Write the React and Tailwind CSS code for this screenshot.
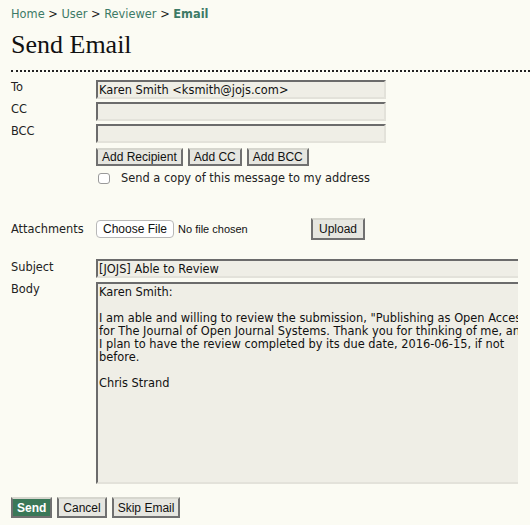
import React from 'react';

const sans = { fontFamily: '"DejaVu Sans", Verdana, sans-serif' };
const btnFont = { fontFamily: '"Liberation Sans", Arial, sans-serif' };

function Field({ value = '', wide = false }) {
  return (
    <input
      readOnly
      value={value}
      className={`h-[19px] border-2 border-t-[#6b6b6b] border-l-[#6b6b6b] border-b-[#e3e2da] border-r-[#e3e2da] bg-[#efeee6] px-[1px] text-[11.4px] text-[#111] outline-none ${wide ? 'w-[422px] border-r-0' : 'w-[290px]'}`}
      style={sans}
    />
  );
}

function Btn({ children, primary = false, className = 'h-[18px]' }) {
  return (
    <button
      className={`border-2 border-[#707070] border-t-[#d6d6ce] px-[4px] text-[12px] leading-none ${primary ? 'bg-[#3a7858] font-bold text-white' : 'bg-[#e6e6e0] text-[#111]'} ${className}`}
      style={btnFont}
    >
      {children}
    </button>
  );
}

const bodyText = `Karen Smith:

I am able and willing to review the submission, "Publishing as Open Access Policies,"
for The Journal of Open Journal Systems. Thank you for thinking of me, and
I plan to have the review completed by its due date, 2016-06-15, if not
before.

Chris Strand`;

export default function App() {
  return (
    <div className="min-h-[525px] w-[530px] overflow-hidden bg-[#fbfbf3] pl-[11px] text-[#222]" style={sans}>
      {/* breadcrumb */}
      <div className="pt-[7px] text-[11.4px] leading-[14px] text-[#222]">
        <span className="text-[#3d7a66]">Home</span> &gt; <span className="text-[#3d7a66]">User</span> &gt;{' '}
        <span className="text-[#3d7a66]">Reviewer</span> &gt; <span className="font-bold text-[#3d7a66]">Email</span>
      </div>

      <h1 className="mt-[9px] text-[26px] leading-[30px] text-[#111]" style={{ fontFamily: '"Liberation Serif", Georgia, serif' }}>
        Send Email
      </h1>

      <div className="mt-[10px] border-t-2 border-dotted border-[#222]" />

      {/* recipients */}
      <div className="mt-[8px] flex flex-col gap-[3px]">
        <div className="flex">
          <label className="w-[85px] text-[11.4px] leading-[14px]">To</label>
          <Field value="Karen Smith <ksmith@jojs.com>" />
        </div>
        <div className="flex">
          <label className="w-[85px] text-[11.4px] leading-[14px]">CC</label>
          <Field />
        </div>
        <div className="flex">
          <label className="w-[85px] text-[11.4px] leading-[14px]">BCC</label>
          <Field />
        </div>
      </div>

      <div className="ml-[85px] mt-[5px] flex gap-[5px]">
        <Btn>Add Recipient</Btn>
        <Btn>Add CC</Btn>
        <Btn>Add BCC</Btn>
      </div>

      <label className="ml-[87px] mt-[5px] flex items-center gap-[11px] text-[11.4px] leading-[14px]">
        <span className="block h-[11px] w-[12px] rounded-[3px] border border-[#9a9a9a] bg-white" />
        Send a copy of this message to my address
      </label>

      {/* attachments */}
      <div className="mt-[33px] flex h-[22px] items-center">
        <label className="w-[85px] text-[11.4px] leading-[14px]">Attachments</label>
        <div className="flex w-[215px] items-center">
          <button
            className="h-[18px] rounded-[4px] border border-[#b8b8b8] bg-white px-[6px] text-[12px] leading-none text-[#111]"
            style={btnFont}
          >
            Choose File
          </button>
          <span className="ml-[4px] text-[11px] text-[#111]" style={btnFont}>
            No file chosen
          </span>
        </div>
        <Btn className="h-[22px] px-[6px]">Upload</Btn>
      </div>

      {/* subject + body */}
      <div className="mt-[19px] flex">
        <label className="w-[85px] pt-[1px] text-[11.4px] leading-[14px]">Subject</label>
        <Field value="[JOJS] Able to Review" wide />
      </div>

      <div className="mt-[4px] flex">
        <label className="w-[85px] text-[11.4px] leading-[14px]">Body</label>
        <textarea
          readOnly
          wrap="off"
          value={bodyText}
          className="h-[202px] w-[422px] resize-none overflow-hidden border-2 border-r-0 border-t-[#6b6b6b] border-l-[#6b6b6b] border-b-[#e3e2da] bg-[#efeee6] px-[1px] pt-[2px] text-[11.4px] leading-[13px] text-[#111] outline-none"
          style={sans}
        />
      </div>

      <div className="mt-[13px] flex gap-[5px]">
        <Btn primary className="h-[21px]">Send</Btn>
        <Btn className="h-[21px]">Cancel</Btn>
        <Btn className="h-[21px]">Skip Email</Btn>
      </div>
    </div>
  );
}
